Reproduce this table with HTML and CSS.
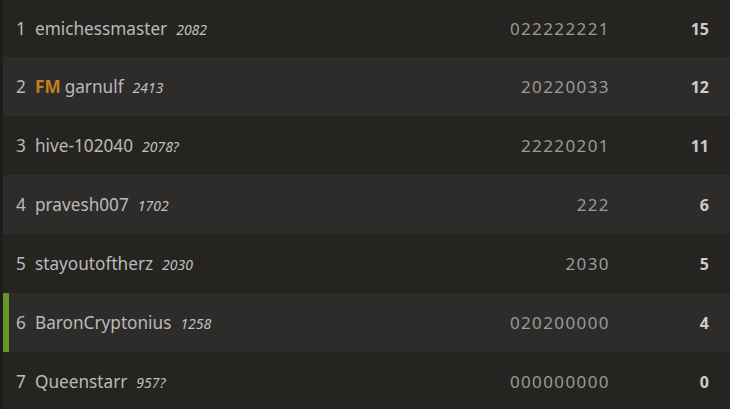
FILE: index.html
```html
<!DOCTYPE html>
<html>
<head>
<meta charset="utf-8">
<link rel="stylesheet" href="styles.css">
</head>
<body>
<div class="standing">
  <div class="row first">
    <span class="rank">1</span>
    <span class="player"><span class="name">emichessmaster</span><em class="rating">2082</em></span>
    <span class="sheet">022222221</span>
    <span class="total">15</span>
  </div>
  <div class="row">
    <span class="rank">2</span>
    <span class="player"><span class="title">FM</span><span class="name">garnulf</span><em class="rating">2413</em></span>
    <span class="sheet">20220033</span>
    <span class="total">12</span>
  </div>
  <div class="row">
    <span class="rank">3</span>
    <span class="player"><span class="name">hive-102040</span><em class="rating">2078?</em></span>
    <span class="sheet">22220201</span>
    <span class="total">11</span>
  </div>
  <div class="row">
    <span class="rank">4</span>
    <span class="player"><span class="name">pravesh007</span><em class="rating">1702</em></span>
    <span class="sheet">222</span>
    <span class="total">6</span>
  </div>
  <div class="row">
    <span class="rank">5</span>
    <span class="player"><span class="name">stayoutoftherz</span><em class="rating">2030</em></span>
    <span class="sheet">2030</span>
    <span class="total">5</span>
  </div>
  <div class="row me">
    <span class="rank">6</span>
    <span class="player"><span class="name">BaronCryptonius</span><em class="rating">1258</em></span>
    <span class="sheet">020200000</span>
    <span class="total">4</span>
  </div>
  <div class="row">
    <span class="rank">7</span>
    <span class="player"><span class="name">Queenstarr</span><em class="rating">957?</em></span>
    <span class="sheet">000000000</span>
    <span class="total">0</span>
  </div>
</div>
</body>
</html>
```

FILE: styles.css
```css
html, body {
  margin: 0;
  padding: 0;
  background: #1e1d1b;
  overflow: hidden;
}
body {
  font-family: "Noto Sans", "Liberation Sans", sans-serif;
  font-size: 17.2px;
  color: #bababa;
}
.standing {
  padding-left: 3px;
  display: flex;
  flex-direction: column;
}
.row {
  display: flex;
  align-items: center;
  height: 59px;
  background: #262421;
}
.row.first {
  height: 57px;
}
.row:nth-child(even) {
  background: #2e2c2a;
}
.row.me {
  box-shadow: inset 6px 0 0 #629924;
}
.rank {
  width: 19px;
  padding-left: 13px;
  flex: none;
}
.player {
  flex: none;
  white-space: nowrap;
}
.title {
  color: #bf811d;
  font-weight: 700;
  margin-right: 4px;
}
.rating {
  font-size: 14px;
  font-style: italic;
  margin-left: 9px;
  color: #c0c0c0;
}
.sheet {
  flex: 1;
  text-align: right;
  font-size: 17px;
  letter-spacing: 1.4px;
  color: #999999;
}
.total {
  flex: none;
  width: 99px;
  padding-right: 21px;
  text-align: right;
  font-size: 16px;
  font-weight: 700;
  color: #cccccc;
}
```
